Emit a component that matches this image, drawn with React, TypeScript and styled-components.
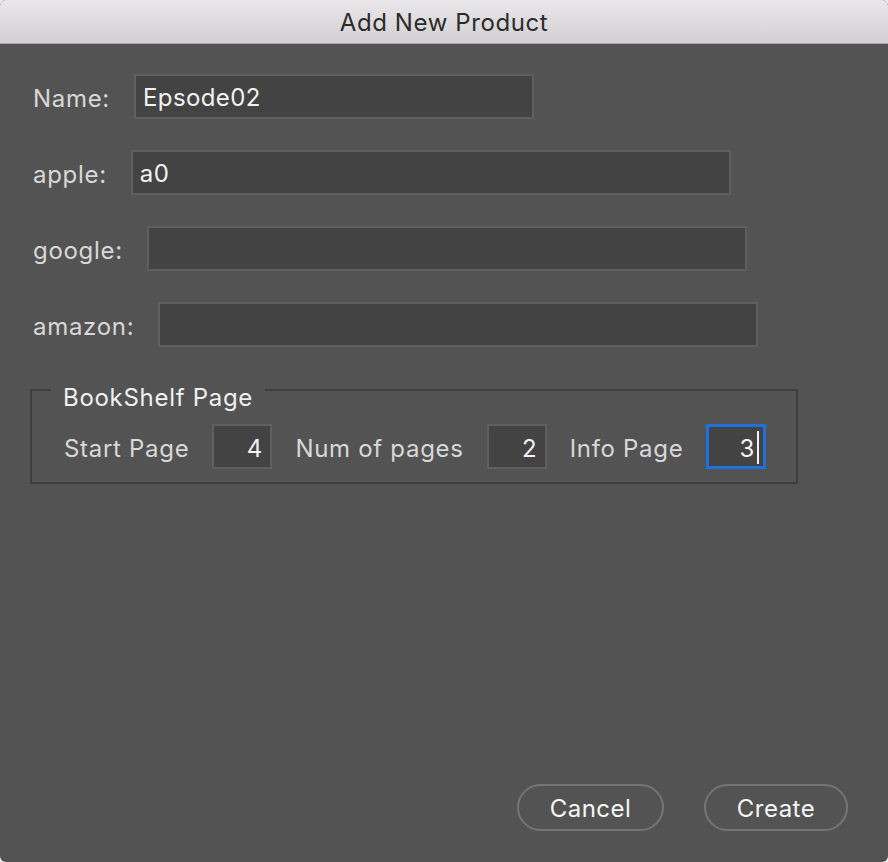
import React from "react";
import styled, { createGlobalStyle } from "styled-components";

const Global = createGlobalStyle`
  html, body { margin: 0; padding: 0; background: #ececec; }
  body { font-family: Inter, "Open Sans", "Liberation Sans", sans-serif; }
  * { box-sizing: border-box; }
`;

const Window = styled.div`
  width: 888px;
  height: 862px;
  background: #535353;
  border-radius: 6px;
  overflow: hidden;
  display: flex;
  flex-direction: column;
`;

const TitleBar = styled.div`
  height: 44px;
  flex: none;
  background: linear-gradient(#e9e7e9, #d2d0d2);
  border-bottom: 1px solid #a9a9a9;
  display: flex;
  align-items: center;
  justify-content: center;
  padding-top: 2px;
  font-family: Inter, "Liberation Sans", sans-serif;
  font-size: 24px;
  letter-spacing: 0.6px;
  color: #2b2b2b;
`;

const Body = styled.div`
  flex: 1;
  display: flex;
  flex-direction: column;
  padding: 30px 40px 31px 30px;
`;

const Fields = styled.div`
  display: flex;
  flex-direction: column;
  gap: 31px;
  padding-left: 3px;
`;

const Row = styled.div`
  display: flex;
  align-items: center;
  gap: 24px;
`;

const Label = styled.span`
  font-size: 24px;
  letter-spacing: 0.7px;
  color: #d8d8d8;
  padding-top: 3px;
`;

const TextInput = styled.div<{ $w: number }>`
  width: ${(p) => p.$w}px;
  height: 45px;
  background: #434343;
  border: 2px solid #5f5f5f;
  display: flex;
  align-items: center;
  padding: 2px 7px 0;
  font-size: 24px;
  letter-spacing: 0.4px;
  color: #f2f2f2;
`;

const Group = styled.fieldset`
  margin: 26px 0 0 0;
  width: 768px;
  border: 2px solid #3e3e3e;
  padding: 0 0 13px 19px;
`;

const Legend = styled.legend`
  padding: 16px 12px 0;
  font-size: 24px;
  letter-spacing: 0.7px;
  color: #f0f0f0;
  line-height: 18px;
`;

const PageRow = styled.div`
  display: flex;
  align-items: center;
  gap: 23px;
  padding-left: 13px;
  margin-top: 17px;
`;

const NumBox = styled.div<{ $focus?: boolean }>`
  position: relative;
  width: 60px;
  height: 45px;
  background: #434343;
  border: ${(p) => (p.$focus ? "3px solid #1f6fdd" : "2px solid #5f5f5f")};
  display: flex;
  align-items: center;
  justify-content: flex-end;
  padding-top: 3px;
  padding-right: ${(p) => (p.$focus ? "9px" : "8px")};
  font-size: 24px;
  color: #f2f2f2;
`;

const Caret = styled.span`
  position: absolute;
  right: 4px;
  top: 4px;
  width: 2px;
  height: 33px;
  background: #f2f2f2;
`;

const Buttons = styled.div`
  margin-top: auto;
  display: flex;
  justify-content: flex-end;
  gap: 40px;
`;

const Button = styled.button<{ $w: number }>`
  width: ${(p) => p.$w}px;
  height: 47px;
  border-radius: 24px;
  border: 2px solid #757575;
  background: transparent;
  color: #f6f6f6;
  font-family: Inter, "Liberation Sans", sans-serif;
  font-size: 24px;
  letter-spacing: 0.5px;
  padding: 2px 0 0;
`;

export default function App() {
  return (
    <>
      <Global />
      <Window>
        <TitleBar>Add New Product</TitleBar>
        <Body>
          <Fields>
            <Row>
              <Label>Name:</Label>
              <TextInput $w={400}>Epsode02</TextInput>
            </Row>
            <Row>
              <Label>apple:</Label>
              <TextInput $w={600}>a0</TextInput>
            </Row>
            <Row>
              <Label>google:</Label>
              <TextInput $w={600}></TextInput>
            </Row>
            <Row>
              <Label>amazon:</Label>
              <TextInput $w={600}></TextInput>
            </Row>
          </Fields>
          <Group>
            <Legend>BookShelf Page</Legend>
            <PageRow>
              <Label>Start Page</Label>
              <NumBox>4</NumBox>
              <Label>Num of pages</Label>
              <NumBox>2</NumBox>
              <Label>Info Page</Label>
              <NumBox $focus>
                3<Caret />
              </NumBox>
            </PageRow>
          </Group>
          <Buttons>
            <Button $w={147}>Cancel</Button>
            <Button $w={144}>Create</Button>
          </Buttons>
        </Body>
      </Window>
    </>
  );
}
